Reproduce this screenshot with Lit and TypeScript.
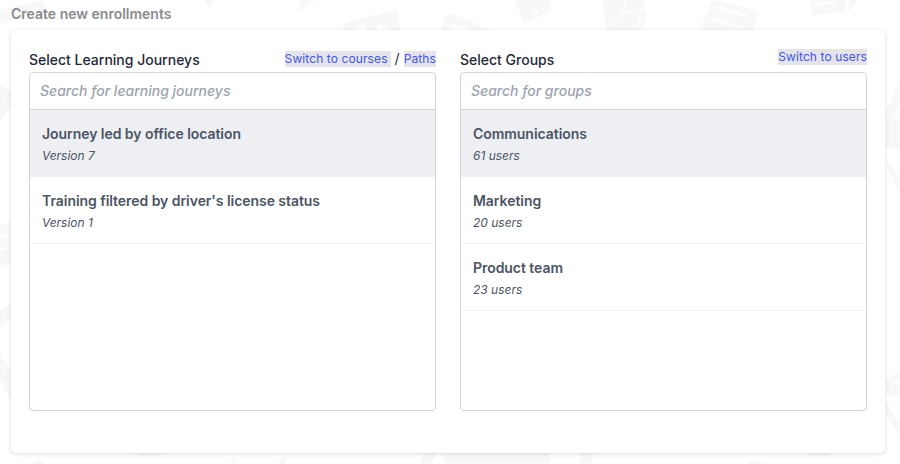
import { LitElement, html, css, svg } from 'lit';
import { customElement } from 'lit/decorators.js';

const journeys = [
  { name: 'Journey led by office location', meta: 'Version 7', selected: true },
  { name: "Training filtered by driver's license status", meta: 'Version 1' },
];

const groups = [
  { name: 'Communications', meta: '61 users', selected: true },
  { name: 'Marketing', meta: '20 users' },
  { name: 'Product team', meta: '23 users' },
];

type Item = { name: string; meta: string; selected?: boolean };

// faint doodles behind the card, only the edges show
const doodles = svg`
  <g fill="#f8f8f8">
    <path d="M0 10L42 0L46 8L0 24Z" />
    <path d="M203 0H214L210 8Z" />
    <path d="M300 11L316 0H300Z" />
    <path d="M342 23L394 10Q398 10 398 14L400 30H344Z" />
    <path d="M451 13L490 30H441L447 16Q448 13 451 13Z" />
    <path d="M515 0H549L551 8Q551 10 549 11L527 23Q524 24 523 21Z" />
    <path d="M602 0H643L647 18L640 30H606Z" />
    <path d="M716 0L754 10Q759 12 758 16L753 30H700L711 3Q712 0 716 0Z" />
    <path d="M810 0H846L845 12L813 15Z" />
    <path d="M848 12L858 0H849Z" />

    <path d="M0 84L11 92V104L0 122Z" />
    <path d="M0 226L11 222V262L0 266Z" />
    <path d="M0 310L11 304V318L0 326Z" />
    <path d="M0 352L11 372V400L0 380Z" />

    <path d="M900 78V100L893 118L886 112Z" />
    <path d="M886 114L900 120V150L886 146Z" />
    <path d="M886 164L890 164L900 178V194Z" />
    <path d="M886 380L900 372V378L886 388Z" />
    <circle cx="893" cy="390" r="7" />
    <path d="M886 402L900 424V436L886 414Z" />

    <path d="M32 464L38 459L46 464Z" />
    <path d="M133 453H165L160 456H140Z" />
    <path d="M232 457H238L236 464H231Z" />
    <path d="M281 457H288L285 464H279Z" />
    <path d="M423 453H436L431 464H420Z" />
    <path d="M446 453H548L552 464H444Z" />
    <path d="M582 453H594L590 464H579Z" />
    <path d="M747 464L754 459L762 464Z" />
    <path d="M808 453H832L826 456H812Z" />
  </g>
  <g stroke="#fff" stroke-width="2.5" stroke-linecap="round" fill="none">
    <path d="M716 7L746 16" />
    <path d="M712 19L742 28" />
    <path d="M815 4L835 2" />
    <path d="M610 24C622 18 628 8 624 1M622 12C630 14 640 10 645 6M640 18L638 28" stroke-width="1.5" />
    <path d="M0 238L11 234M0 250L11 246" />
  </g>
  <g fill="#fff">
    <circle cx="536" cy="12" r="2.5" />
    <path d="M354 30L362 25L368 30ZM376 30L380 24L388 30Z" />
    <path d="M452 24L470 30H450Z" />
  </g>
`;

@customElement('app-root')
export class AppRoot extends LitElement {
  static styles = css`
    :host {
      display: block;
      position: relative;
      height: 464px;
      overflow: hidden;
      background: #fff;
      font-family: Inter, 'Liberation Sans', sans-serif;
    }

    .doodles {
      position: absolute;
      inset: 0;
    }

    .page {
      position: relative;
      display: flex;
      flex-direction: column;
      height: 464px;
      box-sizing: border-box;
      padding: 5px 15px 11px 11px;
    }

    .title {
      height: 25px;
      line-height: 17px;
      font-size: 14px;
      font-weight: 600;
      color: #8a8b8d;
    }

    .card {
      flex: 1;
      display: grid;
      grid-template-columns: 407px 407px;
      column-gap: 24px;
      padding: 18px 18px 42px;
      background: #fff;
      border-radius: 5px;
      box-shadow: 0 1px 4px rgba(30, 35, 50, 0.16);
    }

    .column {
      display: flex;
      flex-direction: column;
      min-height: 0;
    }

    .head {
      display: flex;
      justify-content: space-between;
      height: 24px;
    }

    .label {
      margin-top: 3px;
      line-height: 17px;
      font-size: 14px;
      font-weight: 500;
      color: #1f2937;
    }

    .links {
      display: flex;
      align-items: flex-start;
      padding-top: 1px;
      font-size: 12px;
      line-height: 16px;
      letter-spacing: 0.1px;
      color: #1f2937;
    }

    .links a {
      color: #4257e6;
      background: #e4e4ea;
      text-decoration: none;
    }

    .links.low {
      padding-top: 3px;
    }

    .sep {
      margin: 0 4px;
      font-size: 14px;
    }

    .pad {
      padding-right: 3px;
    }

    .box {
      flex: 1;
      border: 1px solid #d1d5db;
      border-radius: 4px;
      overflow: hidden;
    }

    .search {
      height: 36px;
      padding-left: 10px;
      line-height: 36px;
      font-size: 14px;
      font-style: italic;
      font-weight: 500;
      color: #9ca3af;
      border-bottom: 1px solid #d1d5db;
    }

    .row {
      height: 66px;
      padding-left: 12px;
      border-bottom: 1px solid #f0f1f3;
    }

    .row.selected {
      background: #eeeff3;
      border-bottom-color: #eeeff3;
    }

    .name {
      padding-top: 15px;
      line-height: 17px;
      font-size: 14px;
      font-weight: 600;
      letter-spacing: -0.05px;
      color: #4b5563;
    }

    .meta {
      margin-top: 6px;
      line-height: 16px;
      font-size: 12px;
      font-style: italic;
      color: #4b5563;
    }
  `;

  renderRow(item: Item) {
    return html`
      <div class="row ${item.selected ? 'selected' : ''}">
        <div class="name">${item.name}</div>
        <div class="meta">${item.meta}</div>
      </div>
    `;
  }

  render() {
    return html`
      <svg class="doodles" width="900" height="464">${doodles}</svg>
      <div class="page">
        <div class="title">Create new enrollments</div>
        <div class="card">
          <div class="column">
            <div class="head">
              <div class="label">Select Learning Journeys</div>
              <div class="links low">
                <a class="pad" href="#">Switch to courses</a>
                <span class="sep">/</span>
                <a href="#">Paths</a>
              </div>
            </div>
            <div class="box">
              <div class="search">Search for learning journeys</div>
              ${journeys.map(j => this.renderRow(j))}
            </div>
          </div>
          <div class="column">
            <div class="head">
              <div class="label">Select Groups</div>
              <div class="links">
                <a href="#">Switch to users</a>
              </div>
            </div>
            <div class="box">
              <div class="search">Search for groups</div>
              ${groups.map(g => this.renderRow(g))}
            </div>
          </div>
        </div>
      </div>
    `;
  }
}
